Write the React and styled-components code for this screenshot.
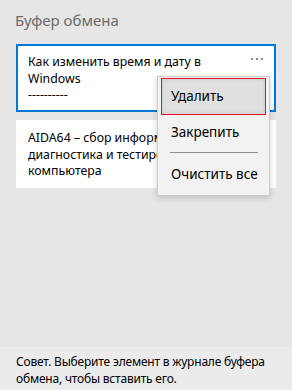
import React from 'react';
import styled, { createGlobalStyle } from 'styled-components';

const GlobalStyle = createGlobalStyle`
    html, body {
        margin: 0;
        padding: 0;
        background: #e6e6e6;
    }
    * {
        box-sizing: border-box;
    }
`;

const Panel = styled.div`
    width: 292px;
    height: 390px;
    display: flex;
    flex-direction: column;
    font-family: "Noto Sans", "Open Sans", sans-serif;
    color: #000;
`;

const Title = styled.div`
    padding: 9px 15px 0;
    height: 44px;
    font-size: 15px;
    color: #6b6b6b;
    line-height: 22px;
`;

const List = styled.div`
    flex: 1;
    display: flex;
    flex-direction: column;
    gap: 8px;
    padding: 0 16px;
`;

const Card = styled.div`
    position: relative;
    height: 68px;
    background: #fff;
    border: 2px solid ${p => (p.selected ? '#0078d7' : '#fff')};
    padding: 8px 10px 0;
    font-size: 12.3px;
    line-height: 16.5px;
`;

const CardText = styled.div`
    width: 232px;
    white-space: pre-line;
    overflow: hidden;
`;

const More = styled.div`
    position: absolute;
    top: 12px;
    right: 11px;
    display: flex;
    gap: 3px;

    span {
        width: 2px;
        height: 2px;
        background: #8a8a8a;
    }
`;

const Menu = styled.div`
    position: absolute;
    left: 139px;
    top: 30px;
    width: 113px;
    background: #f2f2f2;
    border: 1px solid #cccccc;
    box-shadow: 0 2px 6px rgba(0, 0, 0, 0.18);
    padding: 1px 3px 3px;
    z-index: 10;
`;

const MenuItem = styled.div`
    height: ${p => p.h || 37}px;
    display: flex;
    align-items: center;
    padding-left: 9px;
    font-size: 13.5px;
    background: ${p => (p.active ? '#e0e0e0' : 'transparent')};
    border: 1px solid ${p => (p.active ? '#e81123' : 'transparent')};
    box-shadow: ${p => (p.active ? 'inset 0 0 4px rgba(0,0,0,0.12)' : 'none')};
`;

const Separator = styled.div`
    height: 1px;
    background: #8f8f8f;
    margin: 2px 8px 3px 9px;
`;

const Footer = styled.div`
    height: 43px;
    background: #ebebeb;
    padding: 6px 16px 0;
    font-size: 12px;
    letter-spacing: -0.2px;
    line-height: 17px;
`;

export default function App() {
    return (
        <>
            <GlobalStyle />
            <Panel>
                <Title>Буфер обмена</Title>
                <List>
                    <Card selected>
                        <CardText>{'Как изменить время и дату в\nWindows\n----------'}</CardText>
                        <More><span /><span /><span /></More>
                        <Menu>
                            <MenuItem active>Удалить</MenuItem>
                            <MenuItem h={35}>Закрепить</MenuItem>
                            <Separator />
                            <MenuItem h={36}>Очистить все</MenuItem>
                        </Menu>
                    </Card>
                    <Card>
                        <CardText>{'AIDA64 – сбор информации,\nдиагностика и тестирование\nкомпьютера'}</CardText>
                    </Card>
                </List>
                <Footer>Совет. Выберите элемент в журнале буфера обмена, чтобы вставить его.</Footer>
            </Panel>
        </>
    );
}
